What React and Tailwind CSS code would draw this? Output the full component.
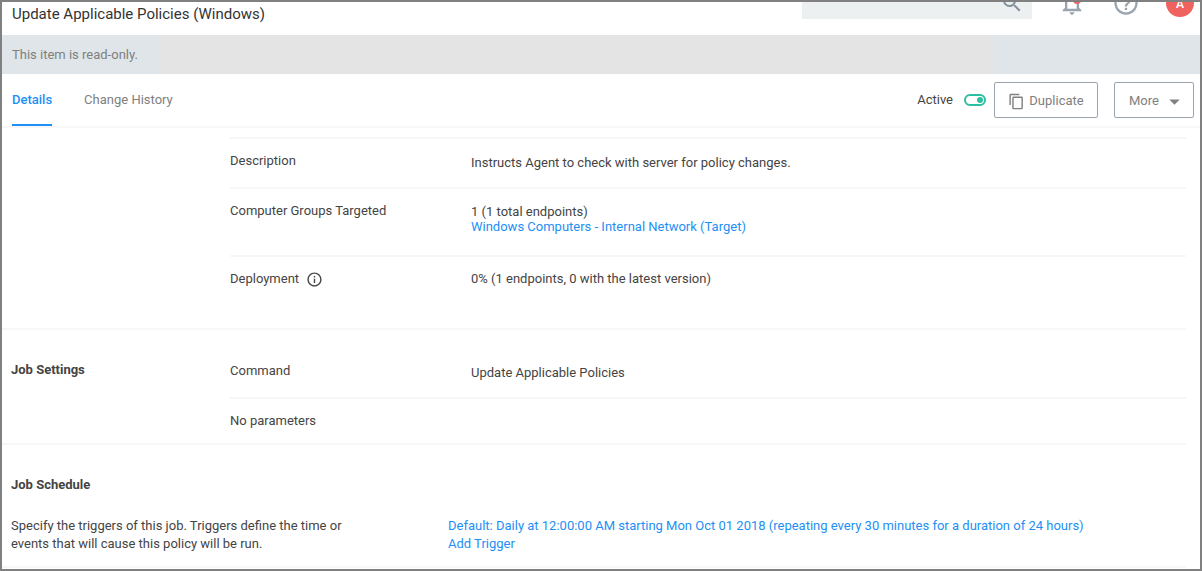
import React, { useState } from "react";
import {
  MdArrowDropDown,
  MdHelpOutline,
  MdInfoOutline,
  MdNotificationsNone,
  MdOutlineContentCopy,
  MdSearch,
} from "react-icons/md";

const line = "border-[#f7f7f7]";

function TopBar() {
  return (
    <header className="flex h-[33px] items-start justify-between overflow-hidden pr-1.5 pl-2.5">
      <h1 className="mt-[2px] text-[15px] leading-5 text-[#333]">
        Update Applicable Policies (Windows)
      </h1>
      <div className="-mt-[15px] flex h-8 items-center gap-[26px] text-[#99a4ae]">
        <div className="flex h-8 w-[230px] items-center bg-[#ecf0f1] pr-2">
          <input aria-label="Search" type="search" className="h-8 min-w-0 flex-1 bg-transparent px-2 text-[13px] outline-none" />
          <button type="button" aria-label="Run search" className="text-[#85929e]">
            <MdSearch size={24} />
          </button>
        </div>
        <button type="button" aria-label="Notifications" className="relative">
          <MdNotificationsNone size={28} />
          <span className="absolute top-[7px] right-[5px] size-2 rounded-full bg-[#f06260]" />
        </button>
        <button type="button" aria-label="Help">
          <MdHelpOutline size={28} />
        </button>
        <button
          type="button"
          aria-label="Account"
          className="flex size-7 items-center justify-center rounded-full bg-[#f06260] pt-0.5 text-[12px] leading-3 font-medium text-white"
        >
          A
        </button>
      </div>
    </header>
  );
}

function Banner() {
  return (
    <div className="flex h-[39px] items-center bg-[#dfe5e8] bg-[linear-gradient(90deg,#dfe5e8_158px,#e4e4e4_158px,#e4e4e4_992px,#dfe5e8_992px)] pl-2.5 text-[#808080]">
      <p>This item is read-only.</p>
    </div>
  );
}

function ActiveSwitch() {
  const [on, setOn] = useState(true);
  return (
    <label className="flex items-center gap-[11px] text-[#444]">
      Active
      <input
        type="checkbox"
        role="switch"
        checked={on}
        onChange={() => setOn(!on)}
        className="peer sr-only"
      />
      <span className="flex h-3 w-[22px] items-center rounded-full border-2 border-[#2dbfa0] px-px peer-checked:justify-end">
        <span className="size-1.5 rounded-full bg-[#2dbfa0]" />
      </span>
    </label>
  );
}

function TabBar() {
  return (
    <div className={`flex h-[54px] items-stretch justify-between border-b-2 ${line} pr-1.5 pl-2.5`}>
      <nav className="flex gap-8">
        <a href="#details" className="flex items-center border-y-2 border-t-transparent border-b-[#1e90f5] font-medium text-[#1e8ff5]">
          Details
        </a>
        <a href="#history" className="flex items-center text-[#808080]">
          Change History
        </a>
      </nav>
      <div className="flex items-center">
        <ActiveSwitch />
        <button type="button" className="ml-2 flex h-9 w-[104px] items-center justify-center gap-1 rounded-[2px] border border-[#99a4ae] pt-0.5 text-[#808080]">
          <MdOutlineContentCopy size={17} />
          Duplicate
        </button>
        <button type="button" className="ml-4 flex h-9 w-20 items-center justify-between rounded-[2px] border border-[#99a4ae] pt-0.5 pr-1.5 pl-3.5 text-[#808080]">
          More
          <MdArrowDropDown size={25} />
        </button>
      </div>
    </div>
  );
}

function Row({ label, children, className = "" }) {
  return (
    <div className={`grid grid-cols-[241px_1fr] pt-[13px] ${className}`}>
      <dt>{label}</dt>
      <dd>{children}</dd>
    </div>
  );
}

export default function App() {
  return (
    <div className="flex min-h-screen flex-col border-2 border-[#808080] bg-white font-['Roboto',sans-serif] text-[13px] leading-[18px] text-[#444]">
      <TopBar />
      <Banner />
      <TabBar />
      <main className="pr-3.5">
        <section className="pt-[9px] pl-[228px]">
          <dl>
            <Row label="Description" className={`h-[50px] border-t-2 ${line}`}>
              <p className="pt-[2px]">Instructs Agent to check with server for policy changes.</p>
            </Row>
            <Row label="Computer Groups Targeted" className={`h-[68px] border-t-2 ${line}`}>
              <p className="pt-[2px] leading-[15px]">
                1 (1 total endpoints)
                <br />
                <a href="#group" className="text-[#1e8ff5]">
                  Windows Computers - Internal Network (Target)
                </a>
              </p>
            </Row>
            <Row
              className={`h-[73px] border-t-2 ${line}`}
              label={
                <span className="flex items-center gap-[7px]">
                  Deployment
                  <MdInfoOutline size={17} />
                </span>
              }
            >
              0% (1 endpoints, 0 with the latest version)
            </Row>
          </dl>
        </section>

        <section className={`flex border-t-2 ${line}`}>
          <h2 className="w-[228px] pt-[31px] pl-[9px] font-bold">Job Settings</h2>
          <dl className="flex-1 pt-[19px]">
            <Row label="Command" className="h-12">
              <p className="pt-[2px]">Update Applicable Policies</p>
            </Row>
            <Row label="No parameters" className={`h-[46px] border-t-2 ${line}`} />
          </dl>
        </section>

        <section className={`border-y-2 ${line} pt-[31px] pb-[13px] pl-[9px]`}>
          <h2 className="font-bold">Job Schedule</h2>
          <div className="flex pt-[23px]">
            <div className="w-[437px]">
              <p className="w-[350px]">
                Specify the triggers of this job. Triggers define the time or events that will cause this
                policy will be run.
              </p>
            </div>
            <div className="flex flex-1 flex-col items-start text-[#1e8ff5]">
              <a href="#trigger">
                Default: Daily at 12:00:00 AM starting Mon Oct 01 2018 (repeating every 30 minutes for a
                duration of 24 hours)
              </a>
              <button type="button">Add Trigger</button>
            </div>
          </div>
        </section>
      </main>
    </div>
  );
}
